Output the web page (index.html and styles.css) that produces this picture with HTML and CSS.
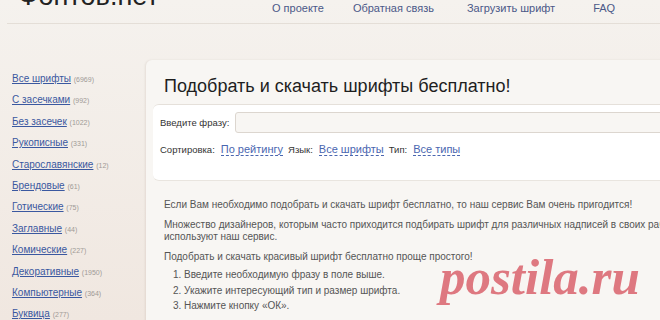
FILE: index.html
```html
<!DOCTYPE html>
<html lang="ru">
<head>
  <meta charset="UTF-8">
  <meta name="viewport" content="width=device-width, initial-scale=1.0">
  <title>Фонтов.нет — шрифты бесплатно</title>
  <link rel="stylesheet" href="styles.css">
</head>
<body>
  <div class="page">
    <!-- Шапка -->
    <div class="top">
      <div class="logo">Фонтов.нет</div>
      <div class="menu">
        <a href="#" class="m1">О проекте</a>
        <a href="#" class="m2">Обратная связь</a>
        <a href="#" class="m3">Загрузить шрифт</a>
        <a href="#">FAQ</a>
      </div>
    </div>

    <div class="layout">
      <!-- Категории -->
      <ul class="cats">
        <li><a href="#">Все шрифты</a> <span>(6969)</span></li>
        <li><a href="#">С засечками</a> <span>(992)</span></li>
        <li><a href="#">Без засечек</a> <span>(1022)</span></li>
        <li><a href="#">Рукописные</a> <span>(331)</span></li>
        <li><a href="#">Старославянские</a> <span>(12)</span></li>
        <li><a href="#">Брендовые</a> <span>(61)</span></li>
        <li><a href="#">Готические</a> <span>(75)</span></li>
        <li><a href="#">Заглавные</a> <span>(44)</span></li>
        <li><a href="#">Комические</a> <span>(227)</span></li>
        <li><a href="#">Декоративные</a> <span>(1950)</span></li>
        <li><a href="#">Компьютерные</a> <span>(364)</span></li>
        <li><a href="#">Буквица</a> <span>(277)</span></li>
      </ul>

      <!-- Основной блок -->
      <div class="panel">
        <h1>Подобрать и скачать шрифты бесплатно!</h1>
        <div class="search">
          <div class="row">
            <label for="phrase">Введите фразу:</label>
            <input type="text" id="phrase">
          </div>
          <div class="row opts">
            <span class="lbl">Сортировка:</span> <a href="#" class="dash">По рейтингу</a>
            <span class="lbl">Язык:</span> <a href="#" class="dash">Все шрифты</a>
            <span class="lbl">Тип:</span> <a href="#" class="dash">Все типы</a>
          </div>
        </div>
        <div class="text">
          <p>Если Вам необходимо подобрать и скачать шрифт бесплатно, то наш сервис Вам очень пригодится!</p>
          <p>Множество дизайнеров, которым часто приходится подбирать шрифт для различных надписей в своих работах, используют наш сервис.</p>
          <p class="last">Подобрать и скачать красивый шрифт бесплатно проще простого!</p>
          <ol>
            <li>Введите необходимую фразу в поле выше.</li>
            <li>Укажите интересующий тип и размер шрифта.</li>
            <li>Нажмите кнопку «ОК».</li>
          </ol>
        </div>
      </div>
    </div>

    <div class="mark">postila.ru</div>
  </div>
</body>
</html>
```

FILE: styles.css
```css
html, body {
  margin: 0;
  overflow: hidden;
}
body {
  font-family: Arial, "Liberation Sans", sans-serif;
  background: linear-gradient(to bottom, #f5f2ee, #f0e7e0);
  height: 320px;
}
.page {
  position: relative;
  width: 800px;
  height: 320px;
  overflow: hidden;
}
/* Шапка */
.top {
  display: flex;
  align-items: flex-end;
  height: 23px;
  margin-left: 7px;
  border-bottom: 1px solid #e4ded7;
}
.logo {
  font-size: 27px;
  color: #222;
  line-height: 27px;
  margin: 0 0 13px 11px;
  width: 254px;
}
.menu {
  display: flex;
  font-size: 11px;
  margin-bottom: 9px;
}
.menu a {
  color: #4b5888;
  text-decoration: none;
  margin-right: 30px;
}
.menu .m1 { margin-right: 29px; }
.menu .m2 { margin-right: 33px; }
.menu .m3 { margin-right: 38px; }
/* Колонки */
.layout {
  display: flex;
  margin-top: 36px;
}
.cats {
  list-style: none;
  margin: 13px 0 0 0;
  padding: 0 0 0 12px;
  width: 134px;
}
.cats li {
  font-size: 10px;
  height: 21.4px;
  line-height: 12px;
}
.cats a {
  color: #3a58a0;
  text-decoration: underline;
}
.cats span {
  color: #a09a96;
  font-size: 7px;
}
.panel {
  flex: 1;
  background: #f8f6f3;
  border-radius: 6px 0 0 0;
  box-shadow: -1px 0 2px rgba(120, 100, 80, 0.12);
  height: 300px;
}
h1 {
  font-weight: normal;
  font-size: 18px;
  color: #1e1e1e;
  margin: 0;
  padding: 16px 0 0 18px;
  height: 28px;
}
.search {
  background: #fff;
  margin-left: 7px;
  border-top: 1px solid #e5e0da;
  border-bottom: 1px solid #e9e5df;
  border-radius: 6px 0 0 6px;
  height: 77px;
  box-sizing: border-box;
  padding: 7px 0 0 7px;
}
.row {
  display: flex;
  align-items: center;
  font-size: 9.5px;
  color: #333;
}
.row label {
  width: 75px;
}
.row input {
  flex: 1;
  height: 21px;
  box-sizing: border-box;
  border: 1px solid #dcd6cf;
  border-radius: 3px 0 0 3px;
  background: #f8f6f3;
}
.opts {
  margin-top: 10px;
  align-items: baseline;
}
.opts .lbl {
  margin-right: 6px;
}
.dash {
  font-size: 11px;
  color: #4a66b0;
  text-decoration: none;
  border-bottom: 1px dashed #4a66b0;
  margin-right: 5px;
}
.text {
  padding: 18px 0 0 18px;
  font-size: 10px;
  color: #555;
  line-height: 12px;
}
.text p {
  margin: 0 0 8px 0;
  width: 575px;
}
.text p.last {
  margin-bottom: 4px;
}
.text ol {
  margin: 0;
  padding-left: 20px;
  line-height: 15.5px;
}
/* Водяной знак */
.mark {
  position: absolute;
  left: 440px;
  top: 251px;
  font-family: "Liberation Serif", serif;
  font-style: italic;
  font-weight: bold;
  font-size: 51px;
  line-height: 52px;
  color: #de7880;
}
```
